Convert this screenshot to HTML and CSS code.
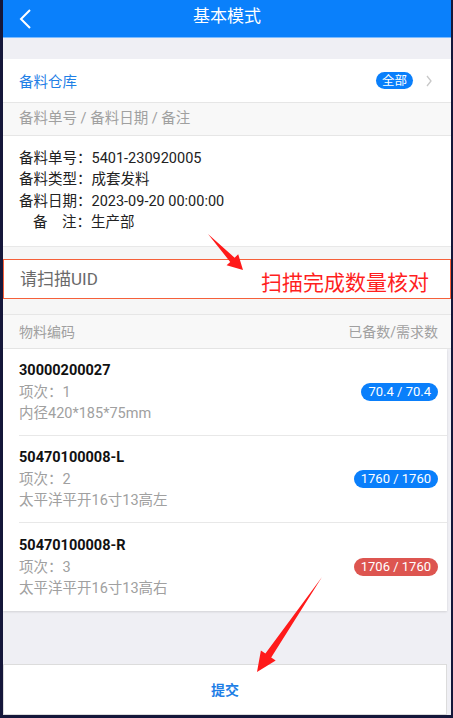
FILE: index.html
```html
<!DOCTYPE html>
<html lang="zh-CN">
<head>
<meta charset="UTF-8">
<meta name="viewport" content="width=device-width, initial-scale=1.0">
<title>基本模式</title>
<link rel="stylesheet" href="styles.css">
</head>
<body>
<div class="screen">
    <!-- 顶部导航 -->
    <div class="nav">
        <svg class="nav-back" width="14" height="20" viewBox="0 0 14 20">
            <polyline points="11,1 2,10 11,19" fill="none" stroke="#fff" stroke-width="2"/>
        </svg>
        <div class="nav-title">基本模式</div>
    </div>
    <div class="gap-top"></div>

    <!-- 仓库 -->
    <div class="cell">
        <span class="cell-label">备料仓库</span>
        <span class="tag">全部</span>
        <svg class="cell-arrow" width="8" height="12" viewBox="0 0 8 12">
            <polyline points="2,1 6,6 2,11" fill="none" stroke="#c8c8c8" stroke-width="1.3"/>
        </svg>
    </div>

    <div class="sec-head">备料单号 / 备料日期 / 备注</div>
    <div class="info">
        <div>备料单号：5401-230920005</div>
        <div>备料类型：成套发料</div>
        <div>备料日期：2023-09-20 00:00:00</div>
        <div class="info-indent">备　注：生产部</div>
    </div>
    <div class="strip"></div>

    <!-- 扫描输入 -->
    <div class="scan">
        <span class="scan-input">请扫描UID</span>
        <span class="note">扫描完成数量核对</span>
    </div>
    <div class="gap-mid"></div>

    <div class="list-head">
        <span>物料编码</span>
        <span>已备数/需求数</span>
    </div>
    <div class="list">
        <div class="item">
            <div class="item-main">
                <div class="item-code">30000200027</div>
                <div class="item-sub">项次：1</div>
                <div class="item-sub">内径420*185*75mm</div>
            </div>
            <span class="qty">70.4 / 70.4</span>
        </div>
        <div class="item">
            <div class="item-main">
                <div class="item-code">50470100008-L</div>
                <div class="item-sub">项次：2</div>
                <div class="item-sub">太平洋平开16寸13高左</div>
            </div>
            <span class="qty">1760 / 1760</span>
        </div>
        <div class="item">
            <div class="item-main">
                <div class="item-code">50470100008-R</div>
                <div class="item-sub">项次：3</div>
                <div class="item-sub">太平洋平开16寸13高右</div>
            </div>
            <span class="qty qty-short">1706 / 1760</span>
        </div>
    </div>
    <div class="filler"></div>

    <div class="bar">
        <span class="submit">提交</span>
    </div>
</div>

<!-- 标注箭头 -->
<svg class="marks" width="453" height="718" viewBox="0 0 453 718">
    <polygon points="208,234 234.6,257.7 238.2,254.3 243,270 226.6,265.3 230.2,261.9" fill="#ff1a1a"/>
    <polygon points="322,577 271.2,657.5 275.7,660.6 257,672 260.9,650.4 265.4,653.5" fill="#ff1a1a"/>
</svg>
</body>
</html>
```

FILE: styles.css
```css
body {
    margin: 0;
    padding: 0;
    background-color: #15173a;
    font-family: Roboto, "Noto Sans CJK SC", sans-serif;
    position: relative;
    width: 453px;
    height: 718px;
    overflow: hidden;
}
.screen {
    margin-left: 3px;
    width: 448px;
    height: 715px;
    background-color: #efeff4;
    display: flex;
    flex-direction: column;
}
.nav {
    height: 37px;
    background-color: #0a80fb;
    border-bottom: 1px solid #7dbcff;
    display: flex;
    align-items: center;
    position: relative;
    flex-shrink: 0;
}
.nav-back {
    margin-left: 16px;
}
.nav-title {
    position: absolute;
    left: 0;
    right: 0;
    text-align: center;
    color: #fff;
    font-size: 17px;
    line-height: 37px;
    margin-top: -4px;
}
.gap-top {
    height: 21px;
    flex-shrink: 0;
}
.cell {
    height: 43px;
    background-color: #fff;
    border-bottom: 1px solid #e6e6e6;
    display: flex;
    align-items: center;
    padding: 0 0 0 16px;
    flex-shrink: 0;
}
.cell-label {
    color: #1f7fe6;
    font-size: 14.5px;
    flex: 1;
}
.tag {
    background-color: #0a7ffb;
    color: #fff;
    font-size: 12.5px;
    line-height: 17px;
    padding: 0 6px;
    border-radius: 9px;
}
.cell-arrow {
    margin: 0 18px 0 12px;
}
.sec-head {
    height: 32px;
    line-height: 32px;
    background-color: #f8f8f8;
    border-bottom: 1px solid #e6e6e6;
    color: #a0a0a0;
    font-size: 14.5px;
    padding-left: 16px;
    flex-shrink: 0;
}
.info {
    background-color: #fff;
    padding: 12px 16px 12px;
    border-bottom: 1px solid #e8e8e8;
    color: #222;
    font-size: 14.5px;
    line-height: 21.4px;
    flex-shrink: 0;
}
.info-indent {
    padding-left: 14px;
}
.strip {
    height: 12px;
    background-color: #f6f6f6;
    flex-shrink: 0;
}
.scan {
    height: 38px;
    background-color: #fff;
    border: 1px solid #f5603a;
    display: flex;
    align-items: center;
    justify-content: space-between;
    padding: 0 21px 0 16px;
    flex-shrink: 0;
}
.scan-input {
    color: #6a6a6a;
    font-size: 17px;
    margin-top: -2px;
}
.note {
    color: #ff1f1f;
    font-size: 21px;
    margin-top: 4px;
}
.gap-mid {
    height: 15px;
    background-color: #f6f6f6;
    flex-shrink: 0;
}
.list-head {
    height: 33px;
    background-color: #f8f8f8;
    border-top: 1px solid #e6e6e6;
    border-bottom: 1px solid #e6e6e6;
    display: flex;
    align-items: center;
    justify-content: space-between;
    padding: 0 13px 0 16px;
    color: #a0a0a0;
    font-size: 14px;
    flex-shrink: 0;
}
.list {
    background-color: #fff;
    margin-right: 4px;
    padding-left: 16px;
    box-shadow: 0 1px 2px rgba(0, 0, 0, 0.12);
    flex-shrink: 0;
}
.item {
    height: 86px;
    border-bottom: 1px solid #e8e8e8;
    display: flex;
    align-items: center;
    padding-right: 9px;
}
.item:last-child {
    border-bottom: none;
    height: 88px;
}
.item-main {
    flex: 1;
    margin-top: 0;
}
.item-code {
    font-weight: bold;
    font-size: 14.5px;
    line-height: 23px;
    color: #111;
}
.item-sub {
    font-size: 14.5px;
    line-height: 21px;
    color: #a0a0a0;
}
.qty {
    background-color: #0a7ffb;
    color: #fff;
    font-size: 13px;
    line-height: 18px;
    padding: 0 7px;
    border-radius: 9px;
}
.qty-short {
    background-color: #dd5550;
}
.filler {
    flex: 1;
}
.bar {
    height: 49px;
    margin-right: 4px;
    background-color: #fff;
    border: 1px solid #dcdcdc;
    display: flex;
    justify-content: center;
    align-items: center;
    flex-shrink: 0;
}
.submit {
    color: #1f7fe6;
    font-weight: bold;
    font-size: 14px;
    margin-top: -2px;
}
.marks {
    position: absolute;
    top: 0;
    left: 0;
    pointer-events: none;
}
```
